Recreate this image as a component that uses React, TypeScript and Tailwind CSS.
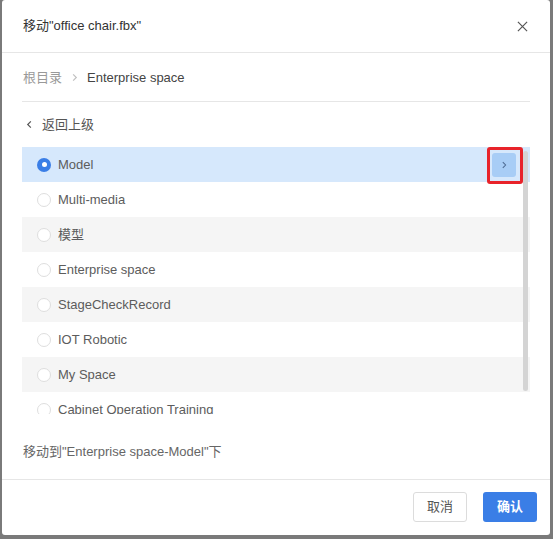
import React from 'react';

const folders = [
  'Model',
  'Multi-media',
  '模型',
  'Enterprise space',
  'StageCheckRecord',
  'IOT Robotic',
  'My Space',
  'Cabinet Operation Training',
];

const Radio = ({ checked }: { checked: boolean }) =>
  checked ? (
    <span className="w-[14px] h-[14px] rounded-full bg-[#3a7ee6] flex items-center justify-center shrink-0">
      <span className="w-[5px] h-[5px] rounded-full bg-white" />
    </span>
  ) : (
    <span className="w-[14px] h-[14px] rounded-full border border-[#dedede] bg-white shrink-0" />
  );

const Chevron = ({ dir, className }: { dir: 'left' | 'right'; className?: string }) => (
  <svg viewBox="0 0 10 10" className={className} fill="none" stroke="currentColor" strokeWidth="1.3">
    {dir === 'left' ? <path d="M6.5 1.5 3 5l3.5 3.5" /> : <path d="M3.5 1.5 7 5 3.5 8.5" />}
  </svg>
);

export default function App() {
  const selected = 0;

  return (
    <div
      className="w-[553px] h-[539px] bg-[#7a7a7a] pl-[2px] pr-[3px] pb-[4px] text-[#333]"
      style={{ fontFamily: '"Liberation Sans", "Noto Sans CJK SC", sans-serif' }}
    >
      <div className="h-full bg-white rounded-[3px] flex flex-col">
        {/* header */}
        <div className="h-[53px] px-[21px] flex items-center justify-between border-b border-[#e6e6e6] shrink-0">
          <span className="text-[13px] text-[#333]">移动"office chair.fbx"</span>
          <svg viewBox="0 0 12 12" className="w-[11px] h-[11px] mr-[1px] text-[#555]" stroke="currentColor" strokeWidth="1.3">
            <path d="M1 1l10 10M11 1 1 11" />
          </svg>
        </div>

        <div className="px-[20px] flex flex-col">
          {/* breadcrumb */}
          <div className="h-[49px] flex items-center border-b border-[#e6e6e6] text-[13px] pl-[1px] pt-[1px]">
            <span className="text-[#999]">根目录</span>
            <Chevron dir="right" className="w-[9px] h-[9px] mx-[8px] text-[#c0c0c0]" />
            <span className="text-[#444]">Enterprise space</span>
          </div>

          {/* back */}
          <div className="h-[45px] flex items-center text-[13px] text-[#555]">
            <Chevron dir="left" className="w-[9px] h-[9px] ml-[3px] mr-[8px] text-[#555]" />
            <span>返回上级</span>
          </div>

          {/* folder list */}
          <div className="relative h-[267px] overflow-hidden">
            {folders.map((name, i) => (
              <div
                key={name}
                className={`h-[35px] flex items-center pl-[15px] pr-[14px] text-[13px] text-[#5c5c5c] ${
                  i === selected ? 'bg-[#d6e8fc]' : i % 2 === 0 ? 'bg-[#f5f5f5]' : 'bg-white'
                }`}
              >
                <Radio checked={i === selected} />
                <span className="ml-[7px] flex-1">{name}</span>
                {i === selected && (
                  <span className="relative w-[24px] h-[24px] rounded-[3px] bg-[#a8cdf6] flex items-center justify-center">
                    <Chevron dir="right" className="w-[8px] h-[8px] text-[#4d6a92]" />
                    <span className="absolute -left-[5px] -top-[6px] w-[36px] h-[37px] border-[3px] border-[#e8232a] rounded-[3px]" />
                  </span>
                )}
              </div>
            ))}
            <div className="absolute right-[2px] top-[4px] w-[5px] h-[240px] rounded-full bg-[#d4d4d4]" />
          </div>

          {/* target */}
          <div className="h-[65px] flex items-center pt-[10px] pl-[1px] text-[13px] text-[#666]">
            移动到"Enterprise space-Model"下
          </div>
        </div>

        {/* footer */}
        <div className="flex-1 border-t border-[#e6e6e6] flex items-center justify-end gap-[16px] pr-[13px] pb-[1px]">
          <button className="w-[54px] h-[30px] rounded-[3px] border border-[#dcdcdc] bg-white text-[13px] text-[#555]">
            取消
          </button>
          <button className="w-[54px] h-[30px] rounded-[3px] bg-[#3a7ee6] text-[13px] text-white font-bold">
            确认
          </button>
        </div>
      </div>
    </div>
  );
}
